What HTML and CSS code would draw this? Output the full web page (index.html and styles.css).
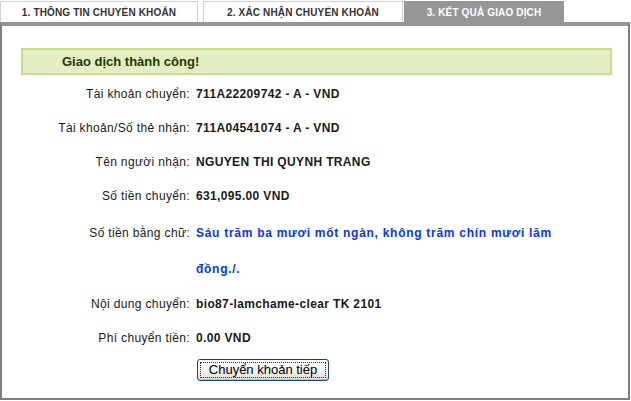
FILE: index.html
```html
<!DOCTYPE html>
<html lang="vi">
<head>
<meta charset="utf-8">
<title>Kết quả giao dịch</title>
<link rel="stylesheet" href="styles.css">
</head>
<body>
<div class="page">
  <div class="tabs">
    <div class="tab tab-1">1. THÔNG TIN CHUYỂN KHOẢN</div>
    <div class="tab tab-2">2. XÁC NHẬN CHUYỂN KHOẢN</div>
    <div class="tab tab-3 active">3. KẾT QUẢ GIAO DỊCH</div>
  </div>
  <div class="box">
    <div class="msg">Giao dịch thành công!</div>
    <div class="details">
      <div class="label">Tài khoản chuyển:</div>
      <div class="value">711A22209742 - A - VND</div>

      <div class="label">Tài khoản/Số thẻ nhận:</div>
      <div class="value">711A04541074 - A - VND</div>

      <div class="label">Tên người nhận:</div>
      <div class="value">NGUYEN THI QUYNH TRANG</div>

      <div class="label">Số tiền chuyển:</div>
      <div class="value">631,095.00 VND</div>

      <div class="label tall">Số tiền bằng chữ:</div>
      <div class="value words">Sáu trăm ba mươi mốt ngàn, không trăm chín mươi lăm đồng./.</div>

      <div class="label">Nội dung chuyển:</div>
      <div class="value">bio87-lamchame-clear TK 2101</div>

      <div class="label">Phí chuyển tiền:</div>
      <div class="value">0.00 VND</div>

      <div class="label"></div>
      <div class="value action">
        <button class="btn" type="button"><span class="btn-focus">Chuyển khoản tiếp</span></button>
      </div>
    </div>
  </div>
</div>
</body>
</html>
```
FILE: styles.css
```css
* { box-sizing: border-box; }
html, body { margin: 0; padding: 0; background: #fff; }
body {
  font-family: "Liberation Sans", Arial, sans-serif;
  font-size: 12px;
  color: #1a1a1a;
}
.page { width: 630px; }

.tabs {
  display: flex;
  padding-top: 1px;
  height: 22px;
}
.tab {
  height: 21px;
  border: 1px solid #cfcfcf;
  border-bottom: none;
  font-weight: bold;
  font-size: 10px;
  letter-spacing: 0.15px;
  color: #333;
  display: flex;
  align-items: center;
  justify-content: center;
  padding-top: 1px;
}
.tab-1 { width: 198px; }
.tab-2 { width: 200px; margin-left: 5px; }
.tab-3 { width: 160px; margin-left: 1px; }
.tab.active {
  background: #969696;
  border-color: #969696;
  color: #fff;
}

.box {
  border-top: 4px solid #969696;
  border-left: 2px solid #7f7f7f;
  border-right: 2px solid #7f7f7f;
  border-bottom: 2px solid #7f7f7f;
  height: 378px;
  padding: 22px 16px 0 19px;
}
.msg {
  height: 27px;
  background: #e4eec3;
  border: 2px solid #c6dc8a;
  color: #1d3a00;
  font-weight: bold;
  font-size: 13px;
  line-height: 23px;
  padding-left: 39px;
  margin-bottom: 2px;
}

.details {
  display: grid;
  grid-template-columns: 169px 390px;
  column-gap: 6px;
  line-height: 34px;
}
.label {
  text-align: right;
  color: #1a1a1a;
  letter-spacing: 0.35px;
}
.value {
  font-weight: bold;
  color: #1a1a1a;
  letter-spacing: 0.36px;
}
.label.tall { line-height: 36px; padding-top: 2px; }
.value.words {
  color: #0a35f0;
  line-height: 36px;
  padding-top: 2px;
  letter-spacing: 0.72px;
  padding-right: 20px;
}
.action {
  line-height: normal;
  padding-top: 4px;
  padding-left: 1px;
  letter-spacing: 0;
}
.btn {
  font-family: "Liberation Sans", Arial, sans-serif;
  font-size: 13px;
  color: #000;
  width: 132px;
  height: 22px;
  padding: 2px;
  border: 1px solid #1c3f78;
  border-radius: 3px;
  background: linear-gradient(#ffffff 0%, #f4f4ef 55%, #dcdbd2 100%);
  box-shadow: inset 0 -1px 0 #c8c6b8, inset 0 1px 0 #fff;
  cursor: pointer;
}
.btn-focus {
  display: block;
  height: 100%;
  line-height: 14px;
  border: 1px dotted #333;
}
```
